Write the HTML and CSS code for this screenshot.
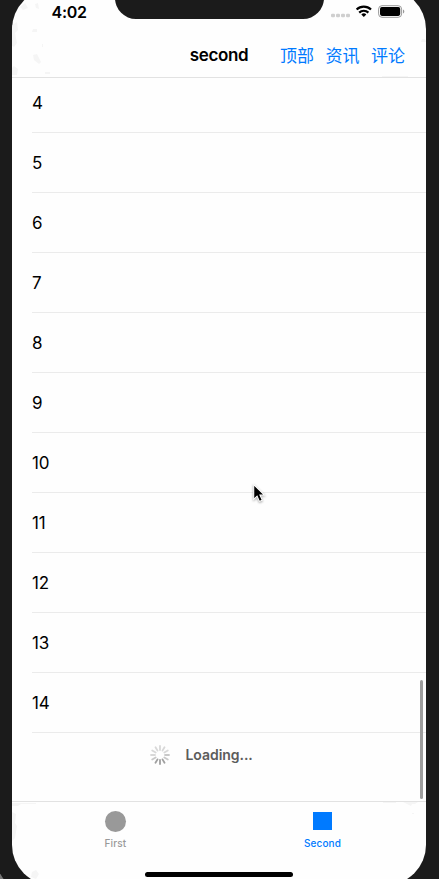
FILE: index.html
```html
<!DOCTYPE html>
<html lang="zh-CN">
<head>
<meta charset="utf-8">
<title>second</title>
<link rel="stylesheet" href="styles.css">
</head>
<body>
<div class="phone">
  <main class="screen">
    <header class="top">
      <svg class="marks" width="414" height="88" fill="#f5f5f5"><path d="M0 36l5-3 1 8-3 3 2 10-3 4-3-2zM8 18l5-4 3 5-5 2zM23 15l3-1 1 6-3-1zM21 40h4v3h-5zM21 66l4-1 4 8-2 2-5-4zM2 77l4 3-1 6H0v-7zM33 83h5v2h-5zM413 50h-3l-1 3h5zM30 55h1v3h-1zM370 87h26v1h-26z"/></svg>
      <div class="notch"></div>
      <div class="status">
        <span class="time">4:02</span>
        <svg class="indicators" width="76" height="16" viewBox="0 0 76 16">
          <g fill="#cfcfcf"><rect x="1" y="9.7" width="4" height="3.6" rx="1.2"/><rect x="6" y="9.7" width="4" height="3.6" rx="1.2"/><rect x="11" y="9.7" width="4" height="3.6" rx="1.2"/><rect x="16" y="9.7" width="4" height="3.6" rx="1.2"/></g>
          <g fill="none" stroke="#000" stroke-width="2.2"><path d="M26.6 5.5a10.3 10.3 0 0 1 14.4 0"/><path d="M29.2 8.6a6.6 6.6 0 0 1 9.2 0"/></g>
          <path d="M31.3 10.4a3.8 3.8 0 0 1 5 0l-2.5 2.7z"/>
          <rect x="48.6" y="1.7" width="23" height="11.6" rx="3.4" fill="none" stroke="#999"/>
          <rect x="50" y="3.1" width="20.2" height="8.8" rx="1.8"/>
          <path d="M73 5.5c1.8.6 1.8 3.4 0 4z" fill="#999"/>
        </svg>
      </div>
      <nav class="nav">
        <h1>second</h1>
        <div class="actions"><a>顶部</a><a>资讯</a><a>评论</a></div>
      </nav>
    </header>
    <section class="list">
      <div class="row first">4</div>
      <div class="row">5</div>
      <div class="row">6</div>
      <div class="row">7</div>
      <div class="row">8</div>
      <div class="row">9</div>
      <div class="row">10</div>
      <div class="row">11</div>
      <div class="row">12</div>
      <div class="row">13</div>
      <div class="row">14</div>
      <div class="loading">
        <svg width="22" height="22" viewBox="-11 -11 22 22" stroke-width="1.8" stroke-linecap="round">
          <g stroke="#d8d8d8"><path d="M0-5v-4"/><path d="M0-5v-4" transform="rotate(30)"/><path d="M0-5v-4" transform="rotate(60)"/><path d="M0-5v-4" transform="rotate(270)"/><path d="M0-5v-4" transform="rotate(300)"/><path d="M0-5v-4" transform="rotate(330)"/></g>
          <g stroke="#c8c8c8"><path d="M0-5v-4" transform="rotate(90)"/><path d="M0-5v-4" transform="rotate(120)"/><path d="M0-5v-4" transform="rotate(240)"/></g>
          <g stroke="#a0a0a0"><path d="M0-5v-4" transform="rotate(150)"/><path d="M0-5v-4" transform="rotate(180)"/><path d="M0-5v-4" transform="rotate(210)"/></g>
        </svg>
        <span>Loading...</span>
      </div>
      <div class="scrollbar"></div>
    </section>
    <footer class="tabs">
      <svg class="marks" width="414" height="83" fill="#f5f5f5"><path d="M0 1h24v1H9l-3 2H0zM0 10l4 2-1 9 2 3-2 12-3 3zM20 70l4-2 3 4-3 5-5-2zM371 0h13v1h-13zM391 0h15l-3 2h-3l-1 2-4-2zM400 11h2v1h-2z"/></svg>
      <div class="tab"><div class="icon circle"></div><span>First</span></div>
      <div class="tab active"><div class="icon square"></div><span>Second</span></div>
      <div class="home"></div>
    </footer>
  </main>
</div>
<svg class="cursor" width="15" height="21" viewBox="0 0 14 20"><path d="M1.5 1.5v14l3.2-3 2.2 5 2.7-1.2-2.2-4.8h4.3z" stroke="#fff" stroke-width="1"/></svg>
</body>
</html>
```
FILE: styles.css
```css
* { box-sizing: border-box; }
html, body { height: 100%; margin: 0; }
body {
  overflow: hidden;
  background: #777;
  font-family: Inter, "Noto Sans CJK SC", sans-serif;
  color: #000;
}
.phone {
  width: 459px;
  height: 930px;
  margin: -25px 0 0 -7px;
  padding: 14px 0 0 19px;
  background: #1b1b1b;
  border-radius: 0 0 60px 60px;
}
.screen {
  position: relative;
  display: flex;
  flex-direction: column;
  width: 414px;
  height: 896px;
  overflow: hidden;
  border-radius: 40px;
  background: #fefefe;
}
.top {
  position: relative;
  height: 89px;
  flex: none;
  border-bottom: 1px solid #e2e2e2;
}
.marks { position: absolute; left: 0; top: 0; }
.notch {
  position: absolute;
  left: 102.5px;
  top: 0;
  width: 209px;
  height: 30px;
  border-radius: 0 0 21px 21px;
  background: #1b1b1b;
}
.status {
  position: relative;
  display: flex;
  justify-content: space-between;
  height: 44px;
  padding: 15px 20px 0 39.5px;
}
.time {
  font-size: 16px;
  line-height: 17px;
  font-weight: 600;
  letter-spacing: -0.25px;
}
.indicators { display: block; }
.nav {
  position: relative;
  display: grid;
  grid-template-columns: 1fr auto 1fr;
  align-items: center;
  height: 44px;
}
.nav h1 {
  grid-column: 2;
  margin: 0;
  font-size: 17px;
  font-weight: 600;
  letter-spacing: -0.4px;
}
.actions {
  display: flex;
  justify-content: flex-end;
  gap: 11.5px;
  padding-right: 21px;
  color: #007aff;
  font-family: "Noto Sans CJK SC", sans-serif;
  font-size: 17px;
  line-height: 24px;
  white-space: nowrap;
}
.list {
  position: relative;
  height: 723px;
  flex: none;
  overflow: hidden;
}
.row {
  height: 60px;
  margin-left: 20px;
  border-bottom: 1px solid #ebebeb;
  font-size: 17px;
  line-height: 61px;
  letter-spacing: -0.1px;
}
.first { margin-top: -5px; }
.loading {
  display: flex;
  align-items: center;
  gap: 14.5px;
  height: 43px;
  padding-left: 137px;
  color: #5c5c5c;
  font-size: 14px;
  line-height: 18px;
  font-weight: 600;
  letter-spacing: -0.05px;
}
.scrollbar {
  position: absolute;
  right: 3px;
  top: 602px;
  width: 3px;
  height: 119px;
  border-radius: 2px;
  background: #9d9d9d;
}
.tabs {
  position: relative;
  display: grid;
  grid-template-columns: 1fr 1fr;
  height: 84px;
  border-top: 1px solid #e2e2e2;
}
.tab {
  display: flex;
  flex-direction: column;
  align-items: center;
  padding-top: 9px;
  color: #999;
  font-size: 10px;
  line-height: 12px;
  font-weight: 500;
  letter-spacing: 0.15px;
}
.icon { background: currentColor; }
.circle { width: 21px; height: 21px; margin-bottom: 5px; border-radius: 50%; }
.square { width: 19px; height: 18px; margin: 1px 0 7px; }
.active { color: #007aff; }
.home {
  position: absolute;
  left: 133px;
  top: 70px;
  width: 148px;
  height: 5px;
  border-radius: 3px;
  background: #000;
}
.cursor {
  position: absolute;
  left: 252px;
  top: 483px;
  filter: drop-shadow(0 1px 1px rgba(0,0,0,.35));
}
```
